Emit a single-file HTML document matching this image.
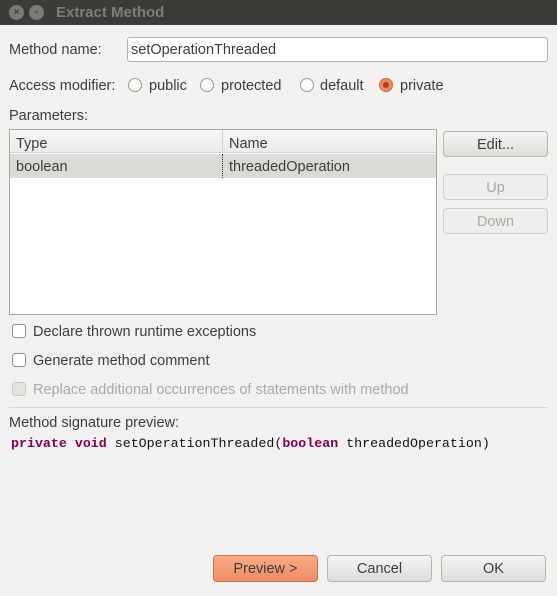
<!DOCTYPE html>
<html><head><meta charset="utf-8"><style>
*{box-sizing:border-box;margin:0;padding:0}
body{width:557px;height:596px;background:#f2f1f0;font-family:"Liberation Sans","DejaVu Sans",sans-serif;font-size:14.5px;color:#3c3c3c;position:relative;overflow:hidden}
.a{position:absolute;white-space:nowrap}
.t{padding-top:2px}
.title{left:0;top:0;width:557px;height:25px;background:#3c3b37}
.circ{position:absolute;width:15px;height:15px;border-radius:50%;background:#7b7a75;color:#3c3b37;font-size:10px;text-align:center;line-height:15px;font-weight:bold}
.btn{position:absolute;border:1px solid #b5b2ab;border-radius:4px;background:linear-gradient(#f6f5f4,#dedcd8);text-align:center;line-height:26px;color:#3c3c3c}
.dis{color:#a9a7a3;border-color:#cfccc7;background:#efeeec}
.radio{position:absolute;width:14px;height:14px;border-radius:50%;border:1px solid #9c9a95;background:#fbfbfa}
.cb{position:absolute;width:14px;height:14px;border-radius:3px;border:1px solid #8f8d88;background:#fff}
.k{color:#7f0055;font-weight:bold}
</style></head><body>
<div class="a title"></div>
<div class="circ" style="left:9px;top:5px">×</div>
<div class="circ" style="left:29px;top:5px">▫</div>
<div class="a" style="left:56px;top:4px;color:#807e78;font-weight:bold;font-size:15px">Extract Method</div>

<div class="a t" style="left:9px;top:40px">Method name:</div>
<div class="a" style="left:127px;top:37px;width:421px;height:25px;background:#fff;border:1px solid #b3b0aa;border-radius:3px;padding:4px 0 0 3px">setOperationThreaded</div>

<div class="a t" style="left:9px;top:76px">Access modifier:</div>
<div class="radio" style="left:128px;top:78px"></div><div class="a t" style="left:149px;top:76px">public</div>
<div class="radio" style="left:200px;top:78px"></div><div class="a t" style="left:221px;top:76px">protected</div>
<div class="radio" style="left:300px;top:78px"></div><div class="a t" style="left:320px;top:76px">default</div>
<div class="radio" style="left:379px;top:78px;background:#f08a5e;border-color:#d06a3e"><div style="position:absolute;left:3px;top:3px;width:6px;height:6px;border-radius:50%;background:#a8401c"></div></div><div class="a t" style="left:400px;top:76px">private</div>

<div class="a t" style="left:9px;top:106px">Parameters:</div>
<div class="a" style="left:9px;top:129px;width:428px;height:186px;background:#fff;border:1px solid #a9a6a0"></div>
<div class="a" style="left:10px;top:130px;width:426px;height:23px;background:linear-gradient(#f7f6f5,#ecebe9);border-bottom:1px solid #d3d0cb"></div>
<div class="a" style="left:222px;top:130px;width:1px;height:23px;background:#d3d0cb"></div>
<div class="a t" style="left:16px;top:134px">Type</div>
<div class="a t" style="left:229px;top:134px">Name</div>
<div class="a" style="left:10px;top:154px;width:426px;height:24px;background:#dcdad6"></div>
<div class="a" style="left:222px;top:154px;height:24px;border-left:1px dotted #333"></div>
<div class="a t" style="left:16px;top:157px">boolean</div>
<div class="a t" style="left:229px;top:157px">threadedOperation</div>

<div class="btn" style="left:443px;top:131px;width:105px;height:26px">Edit...</div>
<div class="btn dis" style="left:443px;top:174px;width:105px;height:26px">Up</div>
<div class="btn dis" style="left:443px;top:208px;width:105px;height:26px">Down</div>

<div class="cb" style="left:12px;top:324px"></div><div class="a t" style="left:33px;top:322px">Declare thrown runtime exceptions</div>
<div class="cb" style="left:12px;top:353px"></div><div class="a t" style="left:33px;top:351px">Generate method comment</div>
<div class="cb" style="left:12px;top:382px;background:#e3e2df;border-color:#c9c7c3"></div><div class="a t" style="left:33px;top:380px;color:#aaa8a4">Replace additional occurrences of statements with method</div>

<div class="a" style="left:9px;top:407px;width:539px;height:1px;background:#d8d5d0"></div>
<div class="a t" style="left:9px;top:413px">Method signature preview:</div>
<div class="a" style="left:11px;top:436px;font-family:'Liberation Mono',monospace;font-size:13.3px;color:#111"><span class="k">private</span> <span class="k">void</span> setOperationThreaded(<span class="k">boolean</span> threadedOperation)</div>

<div class="btn" style="left:213px;top:555px;width:105px;height:27px;background:linear-gradient(#f9ab86,#ef8c64);border-color:#c8704c">Preview &gt;</div>
<div class="btn" style="left:327px;top:555px;width:105px;height:27px">Cancel</div>
<div class="btn" style="left:441px;top:555px;width:105px;height:27px">OK</div>
</body></html>
